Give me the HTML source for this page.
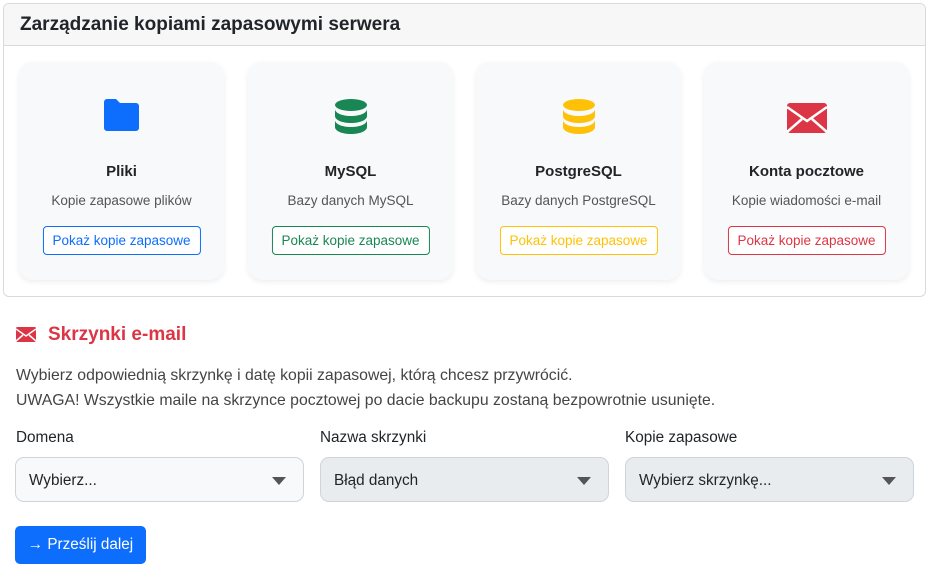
<!DOCTYPE html>
<html><head><meta charset="utf-8"><style>
*{box-sizing:border-box;margin:0;padding:0}
body{width:930px;height:575px;background:#fff;font-family:"Liberation Sans",sans-serif;color:#212529;font-size:15px;position:relative;overflow:hidden}
.outer{position:absolute;left:3px;top:3px;width:923px;height:294px;border:1px solid #d8dadc;border-radius:6px;overflow:hidden}
.hdr{height:42px;background:#f7f7f7;border-bottom:1px solid #d8dadc;padding:10px 16px;font-size:19px;font-weight:bold;color:#212529}
.card{position:absolute;top:58px;width:205px;height:218px;background:#f8f9fa;border-radius:14px;box-shadow:0 2px 6px rgba(0,0,0,.07);text-align:center}
.card svg{position:absolute;left:50%;transform:translateX(-50%);top:36px}
.t{position:absolute;top:101px;width:100%;font-weight:bold;font-size:15px}
.d{position:absolute;top:131px;width:100%;font-size:13.5px;color:#555}
.b{position:absolute;top:164px;left:50%;transform:translateX(-50%);white-space:nowrap;border:1px solid;border-radius:4px;padding:6px 9px;font-size:13.5px;background:#fff}
.sel{position:absolute;top:457px;height:45px;border:1px solid #ced4da;border-radius:9px;padding:14px 13px;font-size:15.3px}
.sel:after{content:"";position:absolute;right:17px;top:19px;border:7px solid transparent;border-top:8px solid #555;border-bottom:0}
.lab{position:absolute;top:429px;font-size:15.3px}
</style></head><body>
<div class="outer"><div class="hdr">Zarządzanie kopiami zapasowymi serwera</div>
<div class="card" style="left:15px"><svg width="40" height="34" viewBox="0 0 40 34"><path d="M2 4a3 3 0 0 1 3-3h9l4 4h16a3 3 0 0 1 3 3v22a3 3 0 0 1-3 3H5a3 3 0 0 1-3-3z" fill="#0d6efd"/></svg><div class="t">Pliki</div><div class="d">Kopie zapasowe plików</div><div class="b" style="color:#0d6efd;border-color:#0d6efd">Pokaż kopie zapasowe</div></div>
<div class="card" style="left:244px"><svg width="34" height="40" viewBox="0 0 34 40"><ellipse cx="17" cy="7" rx="16" ry="6" fill="#198754"/><path d="M1 11c0 4 7 7 16 7s16-3 16-7v7c0 4-7 7-16 7S1 22 1 18z M1 22c0 4 7 7 16 7s16-3 16-7v7c0 4-7 7-16 7S1 33 1 29z" fill="#198754"/></svg><div class="t">MySQL</div><div class="d">Bazy danych MySQL</div><div class="b" style="color:#198754;border-color:#198754">Pokaż kopie zapasowe</div></div>
<div class="card" style="left:472px"><svg width="34" height="40" viewBox="0 0 34 40"><ellipse cx="17" cy="7" rx="16" ry="6" fill="#ffc107"/><path d="M1 11c0 4 7 7 16 7s16-3 16-7v7c0 4-7 7-16 7S1 22 1 18z M1 22c0 4 7 7 16 7s16-3 16-7v7c0 4-7 7-16 7S1 33 1 29z" fill="#ffc107"/></svg><div class="t">PostgreSQL</div><div class="d">Bazy danych PostgreSQL</div><div class="b" style="color:#ffc107;border-color:#ffc107">Pokaż kopie zapasowe</div></div>
<div class="card" style="left:700px"><svg width="42" height="34" viewBox="0 0 42 34" style="top:39px"><rect x="1" y="2" width="40" height="30" rx="3" fill="#dc3545"/><path d="M1 6l20 14 20-14M1 31l15-13M41 31l-15-13" stroke="#fff" stroke-width="2.5" fill="none"/></svg><div class="t">Konta pocztowe</div><div class="d">Kopie wiadomości e-mail</div><div class="b" style="color:#dc3545;border-color:#dc3545">Pokaż kopie zapasowe</div></div>
</div>
<svg style="position:absolute;left:16px;top:327px" width="20" height="15" viewBox="0 0 20 15"><rect width="20" height="15" rx="1.5" fill="#dc3545"/><path d="M0 2l10 7 10-7M0 14l7-6M20 14l-7-6" stroke="#fff" stroke-width="1.5" fill="none"/></svg>
<div style="position:absolute;left:48px;top:324px;font-size:19px;font-weight:bold;color:#dc3545">Skrzynki e-mail</div>
<div style="position:absolute;left:16px;top:363px;font-size:15.8px;line-height:25px;color:#444">Wybierz odpowiednią skrzynkę i datę kopii zapasowej, którą chcesz przywrócić.<br>UWAGA! Wszystkie maile na skrzynce pocztowej po dacie backupu zostaną bezpowrotnie usunięte.</div>
<div class="lab" style="left:16px">Domena</div><div class="lab" style="left:320px">Nazwa skrzynki</div><div class="lab" style="left:625px">Kopie zapasowe</div>
<div class="sel" style="left:15px;width:289px;background:#f8f9fa">Wybierz...</div>
<div class="sel" style="left:320px;width:289px;background:#e9ecef">Błąd danych</div>
<div class="sel" style="left:625px;width:289px;background:#e9ecef">Wybierz skrzynkę...</div>
<div style="position:absolute;left:15px;top:526px;width:131px;height:38px;background:#0d6efd;color:#fff;border-radius:5px;font-size:15.3px;padding:10px 0;text-align:center">→ Prześlij dalej</div>
</body></html>
